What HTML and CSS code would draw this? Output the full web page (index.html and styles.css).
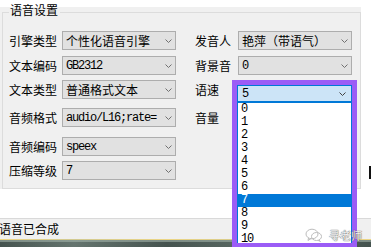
FILE: index.html
```html
<!DOCTYPE html>
<html lang="zh-CN">
<head>
    <meta charset="UTF-8">
    <title>语音设置</title>
    <link rel="stylesheet" href="styles.css">
</head>
<body>
    <div class="screen">
        <div class="top">
            <div class="panel">
                <fieldset class="group">
                    <legend>语音设置</legend>
                    <div class="form">
                        <span class="label">引擎类型</span>
                        <div class="combo"><span>个性化语音引擎</span><svg class="chev" width="7" height="4" viewBox="0 0 7 4"><path d="M0.5 0.5 L3.5 3.5 L6.5 0.5" /></svg></div>
                        <span class="label r">发音人</span>
                        <div class="combo r"><span>艳萍（带语气）</span><svg class="chev" width="7" height="4" viewBox="0 0 7 4"><path d="M0.5 0.5 L3.5 3.5 L6.5 0.5" /></svg></div>

                        <span class="label">文本编码</span>
                        <div class="combo"><span class="mono">GB2312</span><svg class="chev" width="7" height="4" viewBox="0 0 7 4"><path d="M0.5 0.5 L3.5 3.5 L6.5 0.5" /></svg></div>
                        <span class="label r">背景音</span>
                        <div class="combo r"><span class="mono">0</span><svg class="chev" width="7" height="4" viewBox="0 0 7 4"><path d="M0.5 0.5 L3.5 3.5 L6.5 0.5" /></svg></div>

                        <span class="label">文本类型</span>
                        <div class="combo"><span>普通格式文本</span><svg class="chev" width="7" height="4" viewBox="0 0 7 4"><path d="M0.5 0.5 L3.5 3.5 L6.5 0.5" /></svg></div>
                        <span class="label r">语速</span>
                        <div class="slot">
                            <!-- highlighted open dropdown -->
                            <div class="highlight">
                                <div class="dd-combo"><span class="mono">5</span><svg class="chev dark" width="7" height="4" viewBox="0 0 7 4"><path d="M0.5 0.5 L3.5 3.5 L6.5 0.5" /></svg></div>
                                <ul class="dd-list">
                                    <li>0</li>
                                    <li>1</li>
                                    <li>2</li>
                                    <li>3</li>
                                    <li>4</li>
                                    <li>5</li>
                                    <li>6</li>
                                    <li class="sel">7</li>
                                    <li>8</li>
                                    <li>9</li>
                                    <li>10</li>
                                </ul>
                            </div>
                        </div>

                        <span class="label">音频格式</span>
                        <div class="combo"><span class="mono">audio/L16;rate=</span><svg class="chev" width="7" height="4" viewBox="0 0 7 4"><path d="M0.5 0.5 L3.5 3.5 L6.5 0.5" /></svg></div>
                        <span class="label r">音量</span>
                        <div class="combo r"></div>

                        <span class="label">音频编码</span>
                        <div class="combo"><span class="mono">speex</span><svg class="chev" width="7" height="4" viewBox="0 0 7 4"><path d="M0.5 0.5 L3.5 3.5 L6.5 0.5" /></svg></div>

                        <span class="label">压缩等级</span>
                        <div class="combo"><span class="mono">7</span><svg class="chev" width="7" height="4" viewBox="0 0 7 4"><path d="M0.5 0.5 L3.5 3.5 L6.5 0.5" /></svg></div>
                    </div>
                </fieldset>
            </div>
            <div class="edge"><div class="caret"></div></div>
        </div>

        <div class="status">语音已合成</div>
        <div class="photo"></div>

        <div class="watermark">
            <svg width="18" height="14" viewBox="0 0 18 14">
                <ellipse cx="7" cy="6" rx="6" ry="4.8" />
                <path d="M3.5 10 L3 12.5 L6 10.6" />
                <ellipse cx="11.5" cy="8.5" rx="5" ry="4" />
                <path d="M14 12 L15.5 13.5 L13 12.4" />
            </svg>
            <span>寻老师</span>
        </div>
    </div>
</body>
</html>
```

FILE: styles.css
```css
* {
    margin: 0;
    padding: 0;
    box-sizing: border-box;
}

body {
    width: 371px;
    height: 247px;
    overflow: hidden;
    background: #fff;
    font-family: "Noto Sans CJK SC", "Microsoft YaHei", sans-serif;
    font-size: 12px;
    color: #000;
}

.screen {
    position: relative;
    height: 247px;
}

.top {
    display: flex;
    margin-top: 7px;
    height: 182px;
}

.panel {
    width: 361px;
    background: #f0f0f0;
}

.group {
    width: 359px;
    height: 185px;
    min-width: 0;
    margin: -3px 0 0 2px;
    padding: 10px 0 0 6px;
    border: 1px solid #dcdcdc;
}

.group legend {
    padding: 0 2px 5px 1px;
    line-height: 12px;
    font-size: 12px;
}

.form {
    display: grid;
    grid-template-columns: 53px 114px 19px 43px 114px;
    grid-template-rows: 25px 24px 28px 29px 24px 19px;
    align-items: start;
}

.label {
    grid-column: 1;
    height: 19px;
    line-height: 19px;
    white-space: nowrap;
}

.label.r {
    grid-column: 4;
}

.combo {
    grid-column: 2;
    height: 19px;
    display: flex;
    align-items: center;
    padding: 0 3px;
    border: 1px solid #adadad;
    background: #e1e1e1;
    white-space: nowrap;
    overflow: hidden;
}

.combo.r {
    grid-column: 5;
}

.chev {
    margin-left: auto;
    flex-shrink: 0;
}

.chev path {
    fill: none;
    stroke: #707070;
    stroke-width: 1;
}

.chev.dark path {
    stroke: #404040;
}

.mono {
    font-family: "Liberation Mono", monospace;
    letter-spacing: -1.2px;
}

.slot {
    grid-column: 5;
    position: relative;
    height: 19px;
}

.highlight {
    position: absolute;
    left: -6px;
    top: 0;
    width: 125px;
    height: 168px;
    border: 5px solid #9b5cf6;
    background: #fff;
    overflow: hidden;
    z-index: 2;
}

.dd-combo {
    height: 17px;
    display: flex;
    align-items: center;
    padding: 0 5px 0 4px;
    background: #cce4f7;
    border: 1px solid #0078d7;
}

.dd-list {
    list-style: none;
    border: 1px solid #0078d7;
}

.dd-list li {
    height: 13px;
    line-height: 13px;
    padding-left: 3px;
    font-family: "Liberation Mono", monospace;
    letter-spacing: -1.2px;
}

.dd-list li.sel {
    background: #0078d7;
    color: #fff;
}

.edge {
    width: 10px;
}

.caret {
    width: 2px;
    height: 13px;
    margin: 159px 0 0 8px;
    background: #111;
}

.status {
    margin-top: 29px;
    height: 21px;
    border-top: 1px solid #d9d9d9;
    background: #f0f0f0;
    line-height: 20px;
    text-indent: -1px;
    white-space: nowrap;
}

.photo {
    height: 8px;
    background:
        linear-gradient(90deg, rgba(255,255,255,0) 0%, rgba(160,180,170,0.35) 20%, rgba(255,255,255,0) 45%, rgba(150,170,160,0.3) 70%, rgba(255,255,255,0) 100%),
        linear-gradient(#ecd584 0 1px, #7d8c85 1px 3px, #45534f 3px);
}

.watermark {
    position: absolute;
    left: 305px;
    top: 221px;
    display: flex;
    align-items: center;
    gap: 6px;
    z-index: 3;
    font-size: 11px;
    line-height: 14px;
    color: #f2f2f2;
    text-shadow: 0 0 1px #555, 0 0 1px #555;
}

.watermark svg ellipse,
.watermark svg path {
    fill: none;
    stroke: #bdbdbd;
    stroke-width: 1;
}
```
